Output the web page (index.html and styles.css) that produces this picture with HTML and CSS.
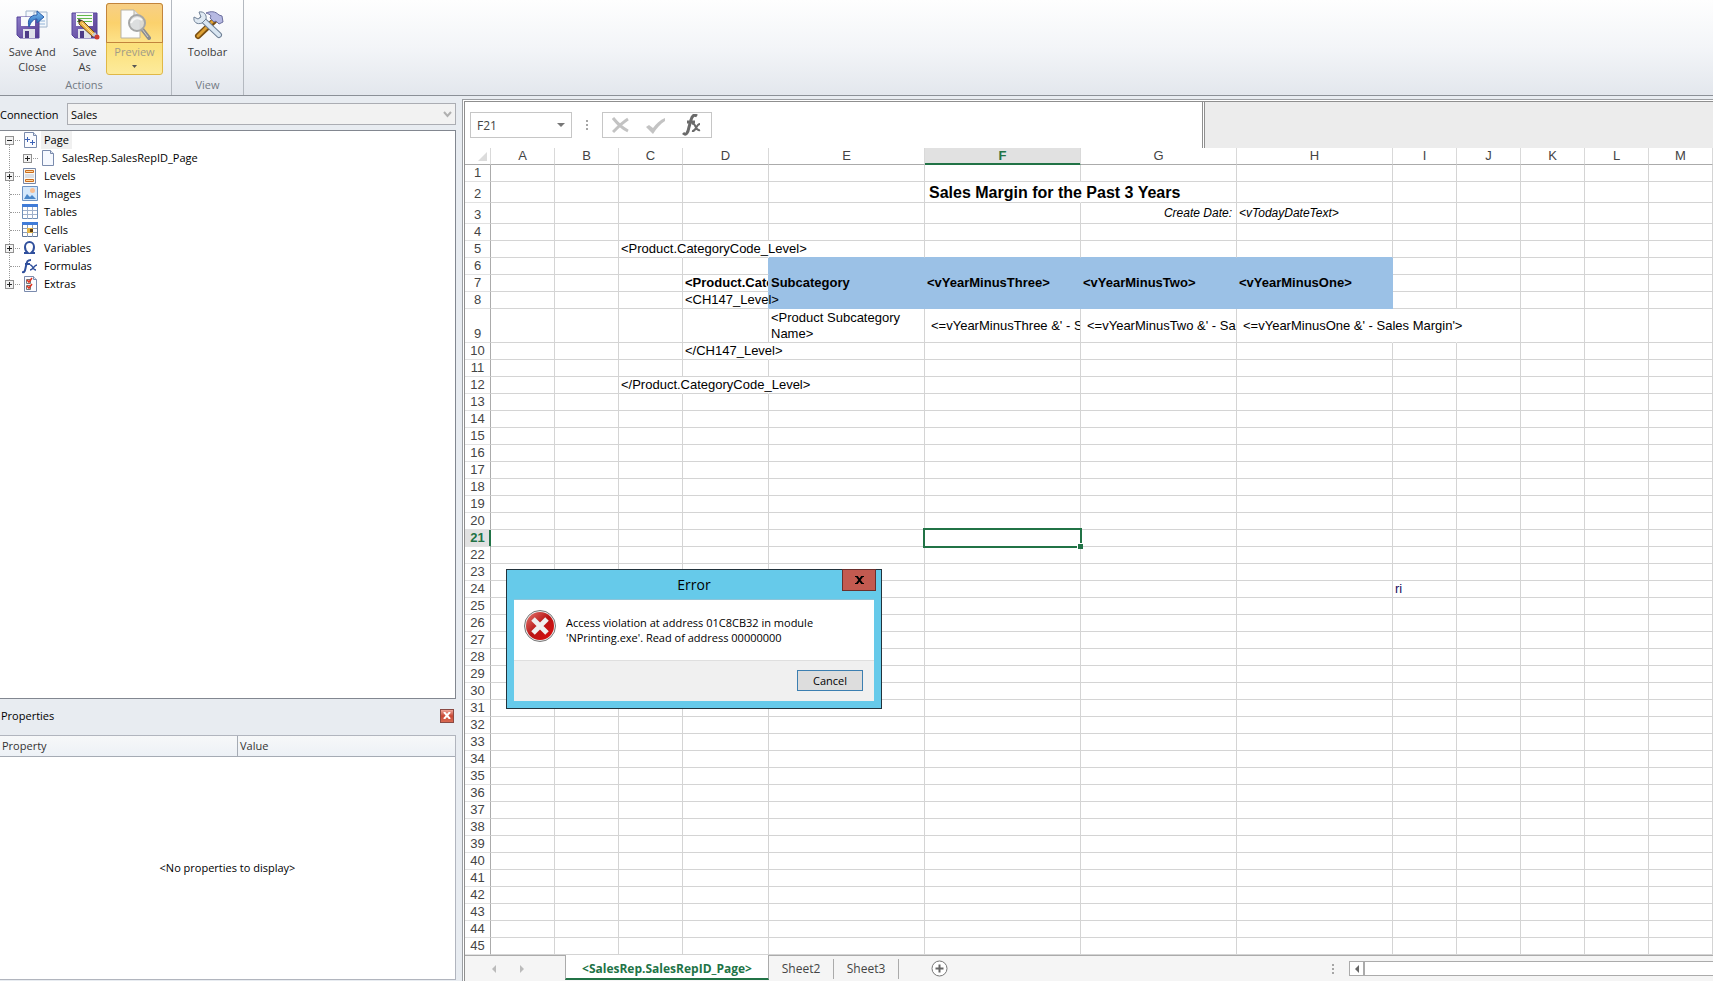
FILE: index.html
```html
<!DOCTYPE html>
<html lang="en">
<head>
<meta charset="utf-8">
<title>Report template editor</title>
<link rel="stylesheet" href="styles.css">
</head>
<body>
<header class="ribbon">
  <section class="group">
    <div class="group-items">
      <button class="tool">
        <svg width="32" height="32" viewBox="0 0 32 32">
          <defs>
            <linearGradient id="disk" x1="0" y1="0" x2="1" y2="1"><stop offset="0" stop-color="#8d7cc8"/><stop offset="1" stop-color="#53398f"/></linearGradient>
            <linearGradient id="arrow" x1="0" y1="0" x2="0" y2="1"><stop offset="0" stop-color="#7fc0f2"/><stop offset="1" stop-color="#1c5cb4"/></linearGradient>
          </defs>
          <path d="M10 2h12v12H10z" fill="#f4f8fc" stroke="#9fb4cc"/>
          <path d="M18 3h13v15H18z" fill="#f4f8fc" stroke="#9fb4cc"/>
          <path d="M21 12h8M21 15h8" stroke="#8fb2d8"/>
          <path d="M1 8h22v21H4l-3-3z" fill="url(#disk)" stroke="#55429a"/>
          <path d="M5 8h14v9H5z" fill="#f8fafc"/>
          <path d="M7 20h12v9H7z" fill="#dfe1ea"/><path d="M9 22h4v7H9z" fill="#4c3a86"/>
          <path d="M13 18c-2-7 1-12 8-12V2l7 6-7 6v-4c-4 0-6 3-8 8z" fill="url(#arrow)" stroke="#2a5ca8"/>
        </svg>
        <span>Save And<br>Close</span>
      </button>
      <button class="tool narrow">
        <svg width="32" height="32" viewBox="0 0 32 32">
          <path d="M3 4h25v25H6l-3-3z" fill="url(#disk)" stroke="#55429a"/>
          <path d="M7 4h17v13H7z" fill="#f8faf8"/>
          <path d="M8 6.500h15M8 9.500h15M8 12.500h15" stroke="#62b84d"/>
          <path d="M9 20h13v9H9z" fill="#dfe1ea"/><path d="M11 22h4v7h-4z" fill="#4c3a86"/>
          <path d="M10 11l4 1 13 13-3 3L10 15z" fill="#f0b64a" stroke="#6e4a1b"/>
          <path d="M13 14l12 12" stroke="#fbe39a"/>
          <path d="M9 10l4 1-3 3z" fill="#333"/>
          <path d="M23 26l3-3 2 3-3 2z" fill="#c6ccd4"/><circle cx="28" cy="28" r="2.500" fill="#cf3b30"/>
        </svg>
        <span>Save<br>As</span>
      </button>
      <button class="tool preview">
        <span class="preview-face">
          <svg width="32" height="32" viewBox="0 0 32 32">
            <path d="M2 1h13l6 6v22H2z" fill="#fcfcfc" stroke="#b9b3a4"/>
            <path d="M15 1v6h6" fill="#e4e4e4" stroke="#b9b3a4"/>
            <path d="M23 20l7 9" stroke="#8e8e8e" stroke-width="4" stroke-linecap="round"/>
            <path d="M23 20l6 8" stroke="#cfcfcf" stroke-width="1"/>
            <circle cx="18" cy="14" r="8" fill="#d8dadb" fill-opacity=".9" stroke="#a5a6a6" stroke-width="2"/>
            <path d="M12 14c2-5 7-6 11-3" fill="none" stroke="#f8f8f8" stroke-width="2"/>
          </svg>
        </span>
        <span class="preview-label">Preview</span>
        <svg class="drop" width="5" height="3" viewBox="0 0 5 3"><path d="M0 0h5L2.500 3z" fill="#555"/></svg>
      </button>
    </div>
    <h2 class="group-title">Actions</h2>
  </section>
  <section class="group view">
    <div class="group-items">
      <button class="tool">
        <svg width="32" height="32" viewBox="0 0 32 32">
          <path d="M22 12L6 27" stroke="#7a4e10" stroke-width="6" stroke-linecap="round"/>
          <path d="M22 11L6 27" stroke="#dda035" stroke-width="3" stroke-linecap="round"/>
          <path d="M14 4c5-2 9-2 13 2l3 1 1 6-4 2-3-3-2 1-4-4 1-2c-1-2-3-2-5-3z" fill="#b6b9e2" stroke="#6c6f9e"/>
          <path d="M10 10l17 16" stroke="#6f8096" stroke-width="6" stroke-linecap="round"/>
          <path d="M10 10l17 16" stroke="#d9e6f2" stroke-width="4" stroke-linecap="round"/>
          <path d="M7 3l2 5-3 2-4-2c-1 5 3 8 8 6l4-4c1-4-2-8-7-7z" fill="#dfe9f2" stroke="#6f8096"/>
        </svg>
        <span>Toolbar</span>
      </button>
    </div>
    <h2 class="group-title">View</h2>
  </section>
</header>

<main class="workspace">
  <aside class="side">
    <div class="connection">
      <label for="conn">Connection</label>
      <div class="select-wrap">
        <select id="conn"><option>Sales</option></select>
        <svg width="9" height="7" viewBox="0 0 9 7"><path d="M1 1l3.500 4L8 1" fill="none" stroke="#b0b0b0" stroke-width="2"/></svg>
      </div>
    </div>
    <ul class="tree">
      <li><button class="toggle" aria-label="Collapse Page"><svg width="7" height="7" viewBox="0 0 7 7"><path d="M1 3.500h5" stroke="#222"/></svg></button>
        <svg width="16" height="16" viewBox="-1 0 16 16"><path d="M1.500.5h9l3 3v12h-12z" fill="#fbfcff" stroke="#7a8bad"/><path d="M10.500.5v3h3" fill="#dde5f2" stroke="#7a8bad"/><path d="M2 7.500h5M4.500 5v5M7 10.500h5M9.500 8v5" stroke="#3c63b8"/></svg>
        <span class="current">Page</span></li>
      <li class="child"><button class="toggle" aria-label="Expand SalesRep page"><svg width="7" height="7" viewBox="0 0 7 7"><path d="M1 3.500h5M3.500 1v5" stroke="#222"/></svg></button>
        <svg width="16" height="16" viewBox="-1 0 16 16"><path d="M1.500.5h8l3 3v12h-11z" fill="#f6f9ff" stroke="#7a8bad"/><path d="M9.500.5v3h3" fill="#dde5f2" stroke="#7a8bad"/></svg>
        <span>SalesRep.SalesRepID_Page</span></li>
      <li><button class="toggle" aria-label="Expand Levels"><svg width="7" height="7" viewBox="0 0 7 7"><path d="M1 3.500h5M3.500 1v5" stroke="#222"/></svg></button>
        <svg width="16" height="16" viewBox="0 0 16 16"><path d="M1.500.5h12v15h-12z" fill="#fbf9f4" stroke="#7587a8"/><path d="M3.500 2.500h8v2h-8zM3.500 11.500h8v2h-8z" fill="#fbd9a8" stroke="#cc6d1c"/><path d="M3 7h9M3 9h9" stroke="#b9c4d6"/></svg>
        <span>Levels</span></li>
      <li class="leaf">
        <svg width="16" height="16" viewBox="0 0 16 16"><path d="M.5.5h15v14H.5z" fill="#d4e8fb" stroke="#6d93c4"/><circle cx="10.500" cy="4.500" r="2.500" fill="#f8bf94"/><path d="M2 13l3-5 3 3 2-2 4 4z" fill="#4a87c9"/></svg>
        <span>Images</span></li>
      <li class="leaf">
        <svg width="16" height="16" viewBox="0 0 16 16"><path d="M.5.5h15v14H.5z" fill="#fff" stroke="#6f8fb8"/><path d="M0 0h16v3H0z" fill="#3f7bd8"/><path d="M1 6.500h14M1 10.500h14M5.500 3v12M10.500 3v12" stroke="#9fb1cc"/></svg>
        <span>Tables</span></li>
      <li class="leaf">
        <svg width="16" height="16" viewBox="0 0 16 16"><path d="M.5.5h15v14H.5z" fill="#fff" stroke="#5f7698"/><path d="M0 0h16v3H0z" fill="#3f7bd8"/><path d="M1 6.500h14M1 10.500h14M5.500 3v12M10.500 3v12" stroke="#8ea0bb"/><path d="M5 6h6v5H5z" fill="#e2b548"/><path d="M8 7h3v3H8z" fill="#5c3a10"/></svg>
        <span>Cells</span></li>
      <li><button class="toggle" aria-label="Expand Variables"><svg width="7" height="7" viewBox="0 0 7 7"><path d="M1 3.500h5M3.500 1v5" stroke="#222"/></svg></button>
        <svg width="16" height="16" viewBox="0 0 16 16"><path d="M2 13h4c-3-2-3-4-3-6 0-3 2-5 4.500-5S12 4 12 7c0 2 0 4-3 6h4" fill="none" stroke="#2f4f9c" stroke-width="2"/></svg>
        <span>Variables</span></li>
      <li class="leaf">
        <svg width="16" height="16" viewBox="0 0 16 16"><path d="M0 14c3 1 3-2 4-6s1-6 5-6M3 6h5" fill="none" stroke="#2f4f9c" stroke-width="2"/><path d="M8 7c3-1 2 5 6 5M15 7c-3 0-4 5-7 5" fill="none" stroke="#2f4f9c" stroke-width="1.500"/></svg>
        <span>Formulas</span></li>
      <li><button class="toggle" aria-label="Expand Extras"><svg width="7" height="7" viewBox="0 0 7 7"><path d="M1 3.500h5M3.500 1v5" stroke="#222"/></svg></button>
        <svg width="16" height="16" viewBox="-1 0 16 16"><path d="M1.500.5h9l3 3v12h-12z" fill="#fbfcff" stroke="#7a8bad"/><path d="M10.500.5v3h3" fill="#dde5f2" stroke="#7a8bad"/><path d="M3.500 3.500h4v4h-4zM3.500 9.500h4v4h-4z" fill="#eee" stroke="#777"/><path d="M4 4l2 2 3-4M4 10l2 2 3-4" fill="none" stroke="#e0331f" stroke-width="1.500"/></svg>
        <span>Extras</span></li>
    </ul>
    <div class="props-bar">
      <h2>Properties</h2>
      <button class="props-close" aria-label="Close properties"><svg width="8" height="7" viewBox="0 0 8 7"><path d="M1 0l6 7M7 0L1 7" stroke="#fff" stroke-width="2"/></svg></button>
    </div>
    <div class="props">
      <table>
        <thead><tr><th>Property</th><th>Value</th></tr></thead>
      </table>
      <p>&lt;No properties to display&gt;</p>
    </div>
  </aside>

  <section class="sheet">
    <div class="sheet-inner">
      <div class="formula-bar">
        <div class="namebox">
          <input aria-label="Name box" value="F21">
          <button aria-label="Cell list"><svg width="8" height="4" viewBox="0 0 8 4"><path d="M0 0h8L4 4z" fill="#777"/></svg></button>
        </div>
        <svg class="dots" width="2" height="10" viewBox="0 0 2 10"><path d="M0 0h2v2H0zM0 4h2v2H0zM0 8h2v2H0z" fill="#a6a6a6"/></svg>
        <div class="fx">
          <button aria-label="Cancel entry"><svg width="18" height="17" viewBox="0 0 18 17"><path d="M1 1c4 5 9 10 15 13M16 2C11 5 6 10 1 15" fill="none" stroke="#c3c3c3" stroke-width="3"/></svg></button>
          <button aria-label="Enter"><svg width="20" height="17" viewBox="0 0 20 17"><path d="M0 10l3-2 4 3C10 7 14 3 19 1v3C14 7 11 11 7 17z" fill="#c3c3c3"/></svg></button>
          <button aria-label="Insert function"><svg width="20" height="22" viewBox="0 0 20 22"><path d="M1 19c3 3 5 0 6-6l2-7c1-4 3-6 6-4M5 8h8" fill="none" stroke="#6a6a6a" stroke-width="3"/><path d="M10 10c4-2 3 8 8 6M18 10c-4 0-4 8-8 7" fill="none" stroke="#6a6a6a" stroke-width="2"/></svg></button>
        </div>
        <div class="bar-rest"></div>
      </div>
      <div class="grid-wrap"><table class="grid" id="grid"></table></div>
      <nav class="tabs">
        <div class="tab-nav">
          <button aria-label="Previous sheet"><svg width="4" height="8" viewBox="0 0 4 8"><path d="M4 0v8L0 4z" fill="#bbb"/></svg></button>
          <button aria-label="Next sheet"><svg width="4" height="8" viewBox="0 0 4 8"><path d="M0 0v8l4-4z" fill="#bbb"/></svg></button>
        </div>
        <button class="tab active">&lt;SalesRep.SalesRepID_Page&gt;</button>
        <button class="tab">Sheet2</button>
        <button class="tab">Sheet3</button>
        <button class="add" aria-label="New sheet"><svg width="17" height="17" viewBox="0 0 17 17"><circle cx="8.500" cy="8.500" r="7.500" fill="#fff" stroke="#777"/><path d="M4.500 8.500h8M8.500 4.500v8" stroke="#666" stroke-width="2"/></svg></button>
        <svg class="dots" width="2" height="10" viewBox="0 0 2 10"><path d="M0 0h2v2H0zM0 4h2v2H0zM0 8h2v2H0z" fill="#a6a6a6"/></svg>
        <div class="hscroll"><button aria-label="Scroll left"><svg width="4" height="8" viewBox="0 0 4 8"><path d="M4 0v8L0 4z" fill="#666"/></svg></button></div>
      </nav>
    </div>
  </section>
</main>

<div class="dialog" role="alertdialog" aria-labelledby="dlg-title">
  <div class="dialog-bar">
    <h2 id="dlg-title">Error</h2>
    <button class="dialog-close" aria-label="Close"><svg width="9" height="8" viewBox="0 0 9 8"><path d="M1.500 0l6 8M7.500 0l-6 8" stroke="#000" stroke-width="2"/><path d="M0 .5h3M6 .5h3M0 7.500h3M6 7.500h3" stroke="#000"/></svg></button>
  </div>
  <div class="dialog-body">
    <div class="message">
      <svg width="32" height="32" viewBox="0 0 32 32">
        <defs><linearGradient id="red" x1="0" y1="0" x2="1" y2="1"><stop offset="0" stop-color="#e57a72"/><stop offset=".5" stop-color="#b81414"/><stop offset="1" stop-color="#e01010"/></linearGradient></defs>
        <circle cx="16" cy="16" r="15.500" fill="#eee" stroke="#777"/>
        <circle cx="16" cy="16" r="14" fill="url(#red)"/>
        <path d="M9 9l14 14M23 9L9 23" stroke="#f0f0f0" stroke-width="5"/>
      </svg>
      <p>Access violation at address 01C8CB32 in module<br>'NPrinting.exe'. Read of address 00000000</p>
    </div>
    <div class="dialog-actions"><button>Cancel</button></div>
  </div>
</div>
<script src="script.js"></script>
</body>
</html>
```
FILE: styles.css
```css
* { box-sizing: border-box; }
body {
  margin: 0;
  height: 100vh;
  display: flex;
  flex-direction: column;
  overflow: hidden;
  background: #e8ecf1;
  color: #000;
  font: 12px/15px "Open Sans", "Noto Sans", sans-serif;
}
button, input, select { font: inherit; color: inherit; margin: 0; padding: 0; border: 0; background: none; border-radius: 0; }
h2, p, ul { margin: 0; padding: 0; font-size: inherit; font-weight: normal; }
svg { display: block; flex: none; }
.side, .dialog, .ribbon { font-size: 11px; }

/* Ribbon */
.ribbon {
  display: flex;
  flex: none;
  height: 96px;
  border-bottom: 1px solid #8b9097;
  background: linear-gradient(#fefefe, #f3f5f8 50%, #e3e7ed);
}
.group {
  display: flex;
  flex-direction: column;
  width: 172px;
  padding: 3px 8px 0 5px;
  border-right: 1px solid #b4b9c0;
}
.group.view { width: 72px; padding: 3px 0 0; align-items: center; }
.group-items { display: flex; height: 72px; }
.group-title { height: 20px; line-height: 20px; text-align: center; color: #737a84; }
.tool {
  display: flex;
  flex-direction: column;
  align-items: center;
  width: 55px;
  padding-top: 6px;
  gap: 3px;
  color: #3b3b3b;
  white-space: nowrap;
}
.tool.narrow { width: 47px; padding-left: 4px; }
.tool.preview {
  width: 57px;
  height: 72px;
  padding: 0;
  gap: 0;
  border: 1px solid #e0b847;
  border-radius: 3px;
  background: linear-gradient(#fdf3c0, #fbe07a 60%, #fdeb9c);
  color: #a19b89;
}
.preview-face {
  display: flex;
  justify-content: center;
  width: 57px;
  height: 40px;
  margin: -1px -1px 0;
  padding-top: 5px;
  border: 1px solid #c2843c;
  border-radius: 3px 3px 0 0;
  background: linear-gradient(#f7cf86, #fbd16c 50%, #fde289);
}
.preview-label { margin-top: 1px; }
.drop { margin-top: 6px; }

/* Left side */
.workspace { flex: 1; display: flex; min-height: 0; }
.side { display: flex; flex-direction: column; width: 456px; flex: none; padding: 7px 0 1px; }
.connection { display: flex; align-items: center; height: 22px; flex: none; }
.connection label { width: 67px; }
.select-wrap { flex: 1; display: grid; align-items: center; }
.select-wrap > * { grid-area: 1 / 1; }
.select-wrap select {
  appearance: none;
  height: 22px;
  padding: 0 3px;
  border: 1px solid #abadb3;
  background: #f2f2f2;
}
.select-wrap svg { justify-self: end; margin-right: 4px; pointer-events: none; }
.tree {
  position: relative;
  flex: 569 1 0;
  margin-top: 5px;
  list-style: none;
  border: solid #828790;
  border-width: 1px 1px 1px 0;
  background: #fff;
}
.tree::before {
  content: "";
  position: absolute;
  left: 9px;
  top: 9px;
  height: 144px;
  border-left: 1px dotted #999;
}
.tree li { position: relative; display: flex; align-items: center; height: 18px; padding-left: 5px; }
.tree li.child { padding-left: 23px; }
.tree li > svg { margin-left: 8px; }
.tree li.leaf > svg { margin-left: 17px; }
.tree li::before {
  content: "";
  position: absolute;
  left: 10px;
  top: 9px;
  width: 10px;
  border-top: 1px dotted #999;
}
.tree li.child::before { left: 28px; }
.tree span { height: 18px; margin-left: 3px; padding: 0 3px; line-height: 18px; }
.tree .current { background: #f0f0f0; }
.toggle {
  position: relative;
  width: 9px;
  height: 9px;
  border: 1px solid #919191;
  background: #f3f3f3;
}
.props-bar { display: flex; align-items: center; justify-content: space-between; height: 36px; flex: none; padding: 0 2px 2px 1px; }
.props-close { display: grid; place-items: center; width: 14px; height: 14px; border: 1px solid #8a4a44; background: linear-gradient(#f0a79b, #c94835 50%, #d86a52); }
.props { flex: 244 1 0; display: flex; flex-direction: column; border: solid #b1b5be; border-width: 1px 1px 1px 0; background: #fff; }
.props table { width: 100%; border-spacing: 0; table-layout: fixed; }
.props th {
  height: 21px;
  padding: 0 2px;
  text-align: left;
  font-weight: normal;
  color: #333;
  border-bottom: 1px solid #a5abb4;
  background: linear-gradient(#f7f8f9, #edf1f6);
}
.props th:first-child { width: 238px; border-right: 1px solid #a5abb4; }
.props p { flex: 1; display: grid; place-items: center; }

/* Spreadsheet */
.sheet { flex: 1; min-width: 0; margin: 3px 0 0 6px; padding: 1px 0 0 1px; border: solid #9b9ea2; border-width: 1px 0 0 1px; background: #fff; }
.sheet-inner { display: flex; flex-direction: column; height: 100%; border: solid #8f8f8f; border-width: 1px 0 0 1px; }
.formula-bar { display: flex; align-items: center; flex: none; height: 46px; padding-left: 5px; }
.namebox { display: flex; align-items: center; width: 102px; height: 26px; border: 1px solid #c6c6c6; }
.namebox input { flex: 1; min-width: 0; padding-left: 6px; color: #444; outline: 0; }
.namebox button { padding: 6px; }
.formula-bar .dots { margin: 0 14px; }
.fx { display: flex; align-items: center; justify-content: space-between; width: 110px; height: 26px; padding: 0 9px; border: 1px solid #c6c6c6; }
.bar-rest { flex: 1; align-self: stretch; margin-left: 490px; border-left: 3px double #8f8f8f; background: #ececec padding-box; }
.grid-wrap { flex: 1; min-height: 0; overflow: hidden; }
.grid { width: 1248px; border-spacing: 0; table-layout: fixed; font: 13px/16px "Liberation Sans", Arial, sans-serif; }
.grid th {
  height: 17px;
  padding: 0;
  vertical-align: bottom;
  font-weight: normal;
  color: #444;
  border-right: 1px solid #ababab;
  border-bottom: 1px solid #e1e1e1;
}
.grid thead th { border-right-color: #d9d9d9; border-bottom-color: #ababab; }
.grid th.on { background: #e1e1e1; color: #217346; font-weight: bold; }
.grid thead th.on { box-shadow: inset 0 -1px #217346; border-bottom-color: #217346; }
.grid tbody th.on { box-shadow: inset -1px 0 #217346; border-right-color: #217346; }
.corner svg { margin: 0 3px 3px auto; }
.grid td { height: 17px; padding: 0 2px; vertical-align: bottom; white-space: nowrap; border-right: 1px solid #d4d4d4; border-bottom: 1px solid #d4d4d4; }
.grid tr.mid > * { height: 21px; }
.grid tr.tall > * { height: 34px; }
.grid tr.tall td { vertical-align: middle; }
.grid td.open { border-right-color: transparent; }
.grid td.clip { overflow: hidden; }
.grid td.fill { background: #9bc1e6; border-color: #9bc1e6; }
.grid td.fill-below { border-bottom-color: #9bc1e6; }
.grid td.fill-right { border-right-color: #9bc1e6; }
.grid td.bold { font-weight: bold; }
.grid td.title { font-weight: bold; font-size: 16px; line-height: 18px; padding-left: 4px; }
.grid td.italic { font-style: italic; font-size: 12px; vertical-align: middle; }
.grid td.right { text-align: right; padding-right: 4px; }
.grid td.indent { padding-left: 6px; }
.grid td.wrap { white-space: normal; }
.grid td.navy { color: #1b0f5e; }
.grid td.selected { position: relative; }
.selected::before { content: ""; position: absolute; inset: -2px; border: 2px solid #217346; }
.selected::after { content: ""; position: absolute; right: -3px; bottom: -3px; width: 5px; height: 5px; border: solid #fff; border-width: 1px 0 0 1px; background: #217346; }

/* Sheet tabs */
.tabs { display: flex; align-items: center; flex: none; height: 26px; border-top: 1px solid #ababab; background: #f5f5f5; color: #444; }
.tab-nav { display: flex; gap: 24px; width: 100px; padding-left: 27px; }
.tab { width: 65px; height: 20px; border-right: 1px solid #ababab; }
.tab.active {
  width: 204px;
  height: 25px;
  align-self: flex-start;
  margin-top: -1px;
  padding-top: 3px;
  border: solid #ababab;
  border-width: 0 1px;
  border-bottom: 2px solid #217346;
  background: #fff;
  color: #217346;
  font-weight: bold;
}
.add { margin-left: 32px; margin-right: auto; }
.tabs .dots { margin-right: 15px; }
.hscroll { width: 364px; height: 15px; border: 1px solid #ababab; border-right: 0; background: #fff; }
.hscroll button { display: grid; place-items: center; width: 15px; height: 13px; border-right: 2px solid #ababab; }

/* Error dialog */
.dialog { position: absolute; left: 506px; top: 569px; width: 376px; padding: 0 7px 7px; border: 1px solid #22333c; background: #66caea; }
.dialog-bar { display: grid; height: 29px; }
.dialog-bar > * { grid-area: 1 / 1; }
.dialog-bar h2 { text-align: center; font-size: 14px; line-height: 30px; }
.dialog-close { justify-self: end; display: grid; place-items: center; width: 34px; height: 22px; margin: -1px -2px 0 0; border: 1px solid #6b2f2c; background: #c35a50; }
.dialog-body { background: #fff; border-top: 1px solid #8fc4d8; }
.message { display: flex; gap: 10px; height: 60px; padding: 10px; }
.message p { padding-top: 5px; white-space: nowrap; }
.dialog-actions { display: flex; justify-content: flex-end; padding: 9px 11px 10px; border-top: 1px solid #dfdfdf; background: #f0f0f0; }
.dialog-actions button { width: 66px; height: 21px; border: 1px solid #3c7fb1; background: #ddd; }
```
FILE: script.js
```js
const columns = { A: 64, B: 64, C: 64, D: 86, E: 156, F: 156, G: 156, H: 156, I: 64, J: 64, K: 64, L: 64, M: 64 };
const names = Object.keys(columns);
const rowClass = { 2: "mid", 3: "mid", 9: "tall" };

const cells = {
  F2: ["Sales Margin for the Past 3 Years", "title open"],
  G3: ["Create Date:", "italic right"],
  H3: ["<vTodayDateText>", "italic"],
  C5: ["<Product.CategoryCode_Level>", "open"],
  D5: ["", "open"],
  D6: ["", "fill-right"],
  D7: ["<Product.CategoryCode>", "bold clip fill-right"],
  E7: ["Subcategory", "bold"],
  F7: ["<vYearMinusThree>", "bold"],
  G7: ["<vYearMinusTwo>", "bold"],
  H7: ["<vYearMinusOne>", "bold"],
  D8: ["<CH147_Level>", "fill-right"],
  E9: ["<Product Subcategory Name>", "wrap"],
  F9: ["<=vYearMinusThree &' - Sales Margin'>", "clip indent"],
  G9: ["<=vYearMinusTwo &' - Sales Margin'>", "clip indent"],
  H9: ["<=vYearMinusOne &' - Sales Margin'>", "open indent"],
  I9: ["", "open"],
  D10: ["</CH147_Level>", "open"],
  C12: ["</Product.CategoryCode_Level>", "open"],
  D12: ["", "open"],
  F21: ["", "selected"],
  I24: ["ri", "navy"],
};

const grid = document.getElementById("grid");
const make = (tag, parent, cls, text) => {
  const el = document.createElement(tag);
  if (cls) el.className = cls;
  if (text) el.textContent = text;
  parent.append(el);
  return el;
};

const group = make("colgroup", grid);
[26, ...Object.values(columns)].forEach((w) => { make("col", group).style.width = w + "px"; });

const headRow = make("tr", make("thead", grid));
make("th", headRow, "corner").innerHTML =
  '<svg width="9" height="9" viewBox="0 0 9 9"><path d="M9 0v9H0z" fill="#dcdcdc"/></svg>';
names.forEach((n) => make("th", headRow, n === "F" ? "on" : "", n));

const body = make("tbody", grid);
for (let r = 1; r <= 45; r++) {
  const row = make("tr", body, rowClass[r]);
  make("th", row, r === 21 ? "on" : "", String(r));
  names.forEach((n) => {
    const [text, cls] = cells[n + r] || ["", ""];
    const filled = "EFGH".includes(n);
    const extra = filled && r >= 6 && r <= 8 ? " fill" : filled && r === 5 ? " fill-below" : "";
    make("td", row, (cls + extra).trim(), text);
  });
}
```
